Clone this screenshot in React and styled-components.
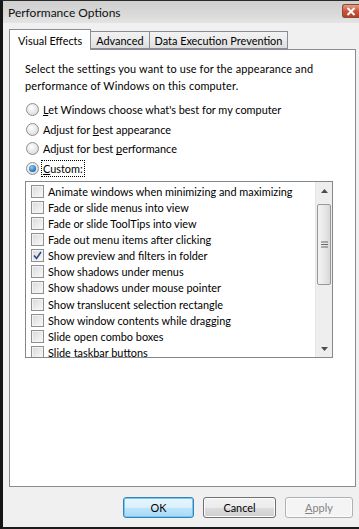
import React from 'react';
import styled, { createGlobalStyle } from 'styled-components';

const GlobalStyle = createGlobalStyle`
  * { box-sizing: border-box; }
  html, body { margin: 0; padding: 0; background: #f0f0f0; }
  body {
    font-family: Lato, "Noto Sans", sans-serif;
    font-size: 10.9px;
    color: #000;
  }
`;

const Window = styled.div`
  width: 359px;
  height: 529px;
  display: flex;
  flex-direction: column;
  background: #f0f0f0;
  border-left: 3px solid #161616;
  border-top: 1px solid #2a2a2a;
  border-bottom: 2px solid #1c1c1c;
  overflow: hidden;
`;

const TitleBar = styled.div`
  height: 22px;
  display: flex;
  align-items: center;
  justify-content: space-between;
  padding-left: 5px;
  background: linear-gradient(#cfcfcf, #d9d9d9 60%, #e4e4e4);
`;

const Title = styled.span`
  font-size: 12px;
  color: #111;
`;

const CloseButton = styled.div`
  width: 17px;
  height: 14px;
  margin-top: -2px;
  display: flex;
  align-items: center;
  justify-content: center;
  border: 1px solid #8a4a3a;
  border-right: none;
  border-radius: 3px 0 0 3px;
  background: linear-gradient(#e8a08a, #c8543a 50%, #b8402a);
`;

const Body = styled.div`
  flex: 1;
  display: flex;
  flex-direction: column;
  padding: 6px 3px 9px 6px;
`;

const TabRow = styled.div`
  display: flex;
  align-items: flex-end;
  height: 20px;
  position: relative;
  z-index: 1;
`;

const Tab = styled.div`
  height: ${({ active }) => (active ? '21px' : '18px')};
  margin-bottom: ${({ active }) => (active ? '-1px' : '0')};
  padding: 0 ${({ active }) => (active ? '8px' : '5px')};
  padding-top: ${({ active }) => (active ? '0' : '1px')};
  display: flex;
  align-items: center;
  justify-content: center;
  border: 1px solid #898c95;
  border-bottom: ${({ active }) => (active ? 'none' : '1px solid #898c95')};
  margin-left: ${({ first }) => (first ? '0' : '-1px')};
  background: ${({ active }) =>
    active ? '#fff' : 'linear-gradient(#f2f2f2, #ebebeb 50%, #dddddd)'};
`;

const Panel = styled.div`
  flex: 1;
  background: #fff;
  border: 1px solid #898c95;
  padding: 10px 0 0 15px;
`;

const Intro = styled.p`
  margin: 0;
  line-height: 17px;
  width: 320px;
  letter-spacing: 0.15px;
`;

const RadioGroup = styled.div`
  margin-top: 6px;
  display: flex;
  flex-direction: column;
`;

const RadioRow = styled.div`
  height: 19.6px;
  display: flex;
  align-items: center;
  gap: 3px;
`;

const RadioCircle = styled.span`
  width: 13px;
  height: 13px;
  flex: none;
  margin-left: 1px;
  border-radius: 50%;
  border: 1px solid #8e8f8f;
  background: radial-gradient(circle at 40% 35%, #ffffff, #e4e4e4 60%, #cfcfcf);
  display: flex;
  align-items: center;
  justify-content: center;
  &::after {
    content: '';
    display: ${({ checked }) => (checked ? 'block' : 'none')};
    width: 7px;
    height: 7px;
    border-radius: 50%;
    background: radial-gradient(circle at 40% 35%, #8fd0f5, #1f6fb5 70%, #0d4a8a);
  }
`;

const RadioLabel = styled.span`
  padding: 0 1px;
  outline: ${({ focused }) => (focused ? '1px dotted #000' : 'none')};
  line-height: 15px;
`;

const ListBox = styled.div`
  margin-top: 3px;
  width: 308px;
  height: 177px;
  border: 1px solid #828790;
  display: flex;
  overflow: hidden;
`;

const Items = styled.div`
  flex: 1;
  min-width: 0;
  overflow: hidden;
  padding-top: 1px;
`;

const ItemRow = styled.div`
  height: 16.1px;
  display: flex;
  align-items: center;
  padding-left: 5px;
  gap: 4px;
  white-space: nowrap;
`;

const CheckBox = styled.span`
  width: 13px;
  height: 13px;
  flex: none;
  border: 1px solid #8e8f8f;
  background: linear-gradient(135deg, #d8d8d8, #f0f0f0 70%, #fafafa);
  box-shadow: inset 0 0 0 1px #f4f4f4;
  display: flex;
  align-items: center;
  justify-content: center;
`;

const ScrollBar = styled.div`
  width: 17px;
  flex: none;
  display: flex;
  flex-direction: column;
  background: #eeeeee;
  border-left: 1px solid #e6e6e6;
`;

const ScrollArrow = styled.div`
  height: 17px;
  display: flex;
  align-items: center;
  justify-content: center;
`;

const Thumb = styled.div`
  margin: 5px 1px 0 1px;
  height: 81px;
  border: 1px solid #979797;
  border-radius: 2px;
  background: linear-gradient(90deg, #f3f3f3, #e8e8e8 50%, #d8d8d8);
  display: flex;
  align-items: center;
  justify-content: center;
`;

const Track = styled.div`
  flex: 1;
`;

const ButtonRow = styled.div`
  margin-top: 10px;
  display: flex;
  justify-content: flex-end;
  gap: 9px;
  padding-right: 3px;
`;

const Button = styled.div`
  width: ${({ w }) => w}px;
  height: 21px;
  display: flex;
  align-items: center;
  justify-content: center;
  border-radius: 3px;
  border: 1px solid
    ${({ variant }) =>
      variant === 'default' ? '#3c7fb1' : variant === 'disabled' ? '#adb2b5' : '#707070'};
  background: ${({ variant }) =>
    variant === 'default'
      ? 'linear-gradient(#eaf6fd, #d9f0fc 50%, #bee6fd 51%, #a7d9f5)'
      : variant === 'disabled'
      ? '#f4f4f4'
      : 'linear-gradient(#f2f2f2, #ebebeb 50%, #dddddd 51%, #cfcfcf)'};
  color: ${({ variant }) => (variant === 'disabled' ? '#838383' : '#000')};
  box-shadow: ${({ variant }) =>
    variant === 'default' ? 'inset 0 0 0 1px #6ecbf8' : 'inset 0 0 0 1px #fcfcfc'};
`;

const items = [
  ['Animate windows when minimizing and maximizing', false],
  ['Fade or slide menus into view', false],
  ['Fade or slide ToolTips into view', false],
  ['Fade out menu items after clicking', false],
  ['Show preview and filters in folder', true],
  ['Show shadows under menus', false],
  ['Show shadows under mouse pointer', false],
  ['Show translucent selection rectangle', false],
  ['Show window contents while dragging', false],
  ['Slide open combo boxes', false],
  ['Slide taskbar buttons', false],
];

const Check = () => (
  <svg width="9" height="9" viewBox="0 0 9 9">
    <path d="M1 4.5 L3.5 7.5 L8 1" fill="none" stroke="#2a4a8a" strokeWidth="1.6" />
  </svg>
);

const App = () => {
  return (
    <React.Fragment>
      <GlobalStyle />
      <Window>
        <TitleBar>
          <Title>Performance Options</Title>
          <CloseButton>
            <svg width="10" height="9" viewBox="0 0 10 9">
              <path d="M1.5 1 L8.5 8 M8.5 1 L1.5 8" stroke="#fff" strokeWidth="2" />
            </svg>
          </CloseButton>
        </TitleBar>
        <Body>
          <TabRow>
            <Tab active first>Visual Effects</Tab>
            <Tab>Advanced</Tab>
            <Tab>Data Execution Prevention</Tab>
          </TabRow>
          <Panel>
            <Intro>
              Select the settings you want to use for the appearance and
              performance of Windows on this computer.
            </Intro>
            <RadioGroup>
              <RadioRow>
                <RadioCircle />
                <RadioLabel><u>L</u>et Windows choose what's best for my computer</RadioLabel>
              </RadioRow>
              <RadioRow>
                <RadioCircle />
                <RadioLabel>Adjust for <u>b</u>est appearance</RadioLabel>
              </RadioRow>
              <RadioRow>
                <RadioCircle />
                <RadioLabel>Adjust for best <u>p</u>erformance</RadioLabel>
              </RadioRow>
              <RadioRow>
                <RadioCircle checked />
                <RadioLabel focused><u>C</u>ustom:</RadioLabel>
              </RadioRow>
            </RadioGroup>
            <ListBox>
              <Items>
                {items.map(([label, on]) => (
                  <ItemRow key={label}>
                    <CheckBox>{on && <Check />}</CheckBox>
                    {label}
                  </ItemRow>
                ))}
              </Items>
              <ScrollBar>
                <ScrollArrow>
                  <svg width="7" height="4" viewBox="0 0 7 4">
                    <path d="M0 4 L3.5 0 L7 4 Z" fill="#4d4d4d" />
                  </svg>
                </ScrollArrow>
                <Thumb>
                  <svg width="7" height="7" viewBox="0 0 7 7">
                    <path d="M0 1 H7 M0 3.5 H7 M0 6 H7" stroke="#6a6a6a" strokeWidth="1" />
                  </svg>
                </Thumb>
                <Track />
                <ScrollArrow>
                  <svg width="7" height="4" viewBox="0 0 7 4">
                    <path d="M0 0 L3.5 4 L7 0 Z" fill="#4d4d4d" />
                  </svg>
                </ScrollArrow>
              </ScrollBar>
            </ListBox>
          </Panel>
          <ButtonRow>
            <Button w={71} variant="default">OK</Button>
            <Button w={73}>Cancel</Button>
            <Button w={68} variant="disabled"><span><u>A</u>pply</span></Button>
          </ButtonRow>
        </Body>
      </Window>
    </React.Fragment>
  );
};

export default App;
